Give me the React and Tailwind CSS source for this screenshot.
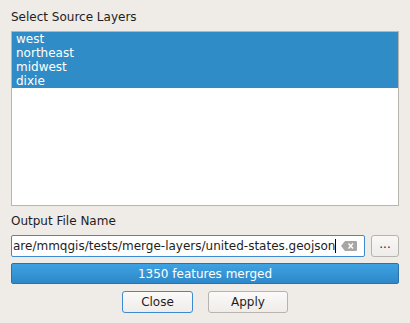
export default function App() {
  const layers = ["west", "northeast", "midwest", "dixie"];
  return (
    <div
      className="w-[410px] h-[323px] bg-[#efebe7] text-[12px] text-[#1e1e1e] px-[11px] pt-[9px] flex flex-col"
      style={{ fontFamily: '"DejaVu Sans", sans-serif' }}
    >
      <div className="h-[16px] leading-[16px]">Select Source Layers</div>
      <div className="mt-[6px] h-[175px] w-[388px] border border-[#b9b5b1] bg-white flex flex-col">
        {layers.map((l) => (
          <div key={l} className="h-[14px] leading-[14px] bg-[#308cc6] text-white pl-[4px]">
            {l}
          </div>
        ))}
      </div>
      <div className="mt-[7px] h-[16px] leading-[16px]">Output File Name</div>
      <div className="mt-[6px] flex gap-[6px] h-[22px]">
        <div className="w-[354px] border border-[#3e8ad0] rounded-[2px] bg-white flex items-center overflow-hidden">
          <span className="whitespace-nowrap pl-[1px] leading-[16px]">are/mmqgis/tests/merge-layers/united-states.geojson</span>
          <span className="w-[1px] h-[14px] bg-black shrink-0" />
          <svg width="16" height="10" viewBox="0 0 16 10" className="ml-[5px] shrink-0">
            <path d="M4 0 H15 a1 1 0 0 1 1 1 V9 a1 1 0 0 1 -1 1 H4 L0 5 Z" fill="#a8a6a3" />
            <path d="M7.5 2.5 L12 7.5 M12 2.5 L7.5 7.5" stroke="white" strokeWidth="1.4" />
          </svg>
        </div>
        <button className="w-[28px] border border-[#b7b3ae] rounded-[3px] bg-gradient-to-b from-[#f9f8f7] to-[#efece9] text-[12px] leading-[12px] pb-[4px]">
          ...
        </button>
      </div>
      <div className="mt-[6px] h-[21px] w-[388px] rounded-[2px] border border-[#2a72a8] bg-gradient-to-b from-[#3ea2e2] to-[#2e88c9] text-white flex items-center justify-center">
        1350 features merged
      </div>
      <div className="mt-[7px] flex justify-center gap-[15px]">
        <button className="w-[71px] h-[22px] border border-[#3e8ad0] rounded-[3px] bg-gradient-to-b from-[#fbfaf9] to-[#efece9]">
          Close
        </button>
        <button className="w-[80px] h-[22px] border border-[#b7b3ae] rounded-[3px] bg-gradient-to-b from-[#fbfaf9] to-[#efece9]">
          Apply
        </button>
      </div>
    </div>
  );
}
